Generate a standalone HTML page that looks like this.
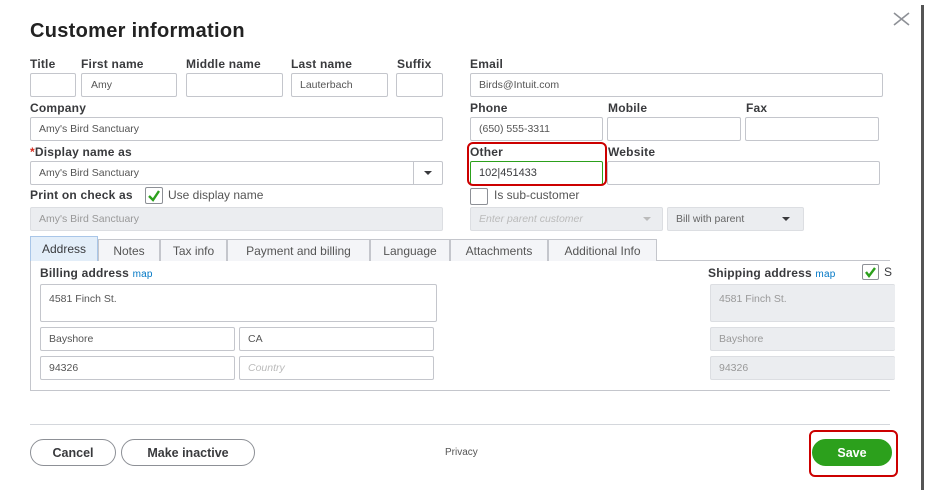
<!DOCTYPE html>
<html><head><meta charset="utf-8"><style>
*{box-sizing:border-box;margin:0;padding:0}
body{width:929px;height:490px;background:#fff;position:relative;overflow:hidden;font-family:"Liberation Sans",sans-serif;color:#393a3d}
.a{position:absolute}
.l{position:absolute;font-size:12px;font-weight:bold;color:#393a3d;letter-spacing:0.2px}
.i{position:absolute;border:1px solid #c4c6cc;border-radius:2px;background:#fff;font-size:10.5px;color:#555;padding:0 0 0 8px;display:flex;align-items:center}
.g{background:#ebedf0;color:#999;border-color:#dcdee2}
.tab{position:absolute;top:239px;height:22px;border:1px solid #c4c6cc;border-bottom:none;background:#f4f5f8;font-size:12px;color:#555;display:flex;align-items:center;justify-content:center}
.cb{position:absolute;width:18px;height:17px;border:1px solid #8d9096;border-radius:2px;background:#fff}
.btn{position:absolute;top:439px;height:27px;border:1px solid #8d9096;border-radius:14px;font-size:12.5px;font-weight:bold;color:#393a3d;display:flex;align-items:center;justify-content:center;background:#fff}
</style></head><body>
<div class="a" style="left:30px;top:20px;font-size:20px;font-weight:bold;color:#222;letter-spacing:0.3px">Customer information</div>
<svg class="a" style="left:893px;top:12px" width="17" height="14"><path d="M1 1L16 13M16 1L1 13" stroke="#8d9096" stroke-width="1.6"/></svg>
<div class="a" style="left:921px;top:5px;width:3px;height:485px;background:#555"></div>

<div class="l" style="left:30px;top:57px">Title</div>
<div class="l" style="left:81px;top:57px">First name</div>
<div class="l" style="left:186px;top:57px">Middle name</div>
<div class="l" style="left:291px;top:57px">Last name</div>
<div class="l" style="left:397px;top:57px">Suffix</div>
<div class="l" style="left:470px;top:57px">Email</div>
<div class="i" style="left:30px;top:73px;width:46px;height:24px"></div>
<div class="i" style="left:81px;top:73px;width:96px;height:24px;padding-left:9px">Amy</div>
<div class="i" style="left:186px;top:73px;width:97px;height:24px"></div>
<div class="i" style="left:291px;top:73px;width:97px;height:24px">Lauterbach</div>
<div class="i" style="left:396px;top:73px;width:47px;height:24px"></div>
<div class="i" style="left:470px;top:73px;width:413px;height:24px">Birds@Intuit.com</div>

<div class="l" style="left:30px;top:101px">Company</div>
<div class="l" style="left:470px;top:101px">Phone</div>
<div class="l" style="left:608px;top:101px">Mobile</div>
<div class="l" style="left:746px;top:101px">Fax</div>
<div class="i" style="left:30px;top:117px;width:413px;height:24px">Amy's Bird Sanctuary</div>
<div class="i" style="left:470px;top:117px;width:133px;height:24px">(650) 555-3311</div>
<div class="i" style="left:607px;top:117px;width:134px;height:24px"></div>
<div class="i" style="left:745px;top:117px;width:134px;height:24px"></div>

<div class="l" style="left:30px;top:145px"><span style="color:#d52b1e">*</span>Display name as</div>
<div class="l" style="left:470px;top:145px">Other</div>
<div class="l" style="left:608px;top:145px">Website</div>
<div class="i" style="left:30px;top:161px;width:413px;height:24px">Amy's Bird Sanctuary</div>
<div class="a" style="left:413px;top:162px;width:1px;height:22px;background:#c4c6cc"></div>
<div class="a" style="left:424px;top:171px;border-left:4px solid transparent;border-right:4px solid transparent;border-top:4px solid #393a3d"></div>
<div class="i" style="left:470px;top:161px;width:133px;height:24px;border-color:#2ca01c;color:#393a3d;font-size:11px">102|451433</div>
<div class="i" style="left:607px;top:161px;width:273px;height:24px"></div>
<div class="a" style="left:467px;top:142px;width:140px;height:44px;border:2px solid #c00;border-radius:6px"></div>

<div class="l" style="left:30px;top:188px">Print on check as</div>
<div class="cb" style="left:145px;top:187px"></div>
<svg class="a" style="left:147px;top:189px" width="14" height="13"><path d="M2 7L6 11L12 2" stroke="#2ca01c" stroke-width="2.4" fill="none"/></svg>
<div class="a" style="left:168px;top:188px;font-size:12px;color:#555">Use display name</div>
<div class="cb" style="left:470px;top:188px"></div>
<div class="a" style="left:494px;top:188px;font-size:12px;color:#555">Is sub-customer</div>
<div class="i g" style="left:30px;top:207px;width:413px;height:24px">Amy's Bird Sanctuary</div>
<div class="i g" style="left:470px;top:207px;width:193px;height:24px;font-style:italic;color:#bbb">Enter parent customer</div>
<div class="a" style="left:643px;top:217px;border-left:4px solid transparent;border-right:4px solid transparent;border-top:4px solid #bbb"></div>
<div class="i g" style="left:667px;top:207px;width:137px;height:24px;color:#666">Bill with parent</div>
<div class="a" style="left:782px;top:217px;border-left:4px solid transparent;border-right:4px solid transparent;border-top:4px solid #393a3d"></div>

<div class="a" style="left:30px;top:260px;width:860px;height:1px;background:#c4c6cc"></div>
<div class="tab" style="left:30px;top:236px;height:25px;width:68px;background:#e3eef9;border-color:#a9c6e8;color:#393a3d">Address</div>
<div class="tab" style="left:98px;width:62px">Notes</div>
<div class="tab" style="left:160px;width:67px">Tax info</div>
<div class="tab" style="left:227px;width:143px">Payment and billing</div>
<div class="tab" style="left:370px;width:80px">Language</div>
<div class="tab" style="left:450px;width:98px">Attachments</div>
<div class="tab" style="left:548px;width:109px">Additional Info</div>
<div class="a" style="left:30px;top:261px;width:1px;height:130px;background:#c4c6cc"></div>
<div class="a" style="left:30px;top:390px;width:860px;height:1px;background:#c4c6cc"></div>

<div class="l" style="left:40px;top:266px">Billing address <span style="color:#0077c5;font-weight:normal;font-size:10px">map</span></div>
<div class="l" style="left:708px;top:266px">Shipping address <span style="color:#0077c5;font-weight:normal;font-size:10px">map</span></div>
<div class="cb" style="left:862px;top:264px;width:17px;height:16px"></div>
<svg class="a" style="left:864px;top:266px" width="13" height="12"><path d="M2 6L5 10L11 2" stroke="#2ca01c" stroke-width="2.4" fill="none"/></svg>
<div class="a" style="left:884px;top:265px;font-size:12px">S</div>
<div class="i" style="left:40px;top:284px;width:397px;height:38px;align-items:flex-start;padding-top:8px">4581 Finch St.</div>
<div class="i" style="left:40px;top:327px;width:195px;height:24px">Bayshore</div>
<div class="i" style="left:239px;top:327px;width:195px;height:24px">CA</div>
<div class="i" style="left:40px;top:356px;width:195px;height:24px">94326</div>
<div class="i" style="left:239px;top:356px;width:195px;height:24px;font-style:italic;color:#bbb">Country</div>
<div class="i g" style="left:710px;top:284px;width:185px;height:38px;align-items:flex-start;padding-top:8px;border-right:none">4581 Finch St.</div>
<div class="i g" style="left:710px;top:327px;width:185px;height:24px;border-right:none">Bayshore</div>
<div class="i g" style="left:710px;top:356px;width:185px;height:24px;border-right:none">94326</div>

<div class="a" style="left:30px;top:424px;width:860px;height:1px;background:#d4d7dc"></div>
<div class="btn" style="left:30px;width:86px">Cancel</div>
<div class="btn" style="left:121px;width:134px">Make inactive</div>
<div class="a" style="left:445px;top:447px;font-size:10px;color:#555">Privacy</div>
<div class="btn" style="left:812px;width:80px;background:#2ca01c;border-color:#2ca01c;color:#fff">Save</div>
<div class="a" style="left:809px;top:430px;width:89px;height:47px;border:2px solid #c00;border-radius:6px"></div>
</body></html>
